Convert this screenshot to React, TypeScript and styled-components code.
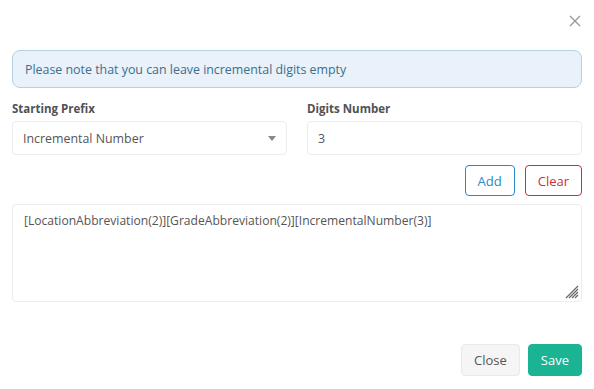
import React from "react";
import styled, { createGlobalStyle } from "styled-components";

const Global = createGlobalStyle`
  body {
    margin: 0;
    background: #ffffff;
    font-family: "Open Sans", "Liberation Sans", sans-serif;
    color: #676a6c;
  }
`;

const Modal = styled.div`
  width: 594px;
  height: 389px;
  box-sizing: border-box;
  display: flex;
  flex-direction: column;
  background: #ffffff;
`;

const Header = styled.div`
  height: 42px;
  display: flex;
  justify-content: flex-end;
  align-items: center;
  padding: 0 12px;
`;

const CloseX = styled.button`
  border: none;
  background: none;
  padding: 0;
  width: 14px;
  height: 14px;
  display: flex;
  cursor: pointer;
`;

const Body = styled.div`
  padding: 8px 12px 0;
  display: flex;
  flex-direction: column;
`;

const Alert = styled.div`
  height: 38px;
  box-sizing: border-box;
  display: flex;
  align-items: center;
  padding: 0 12px;
  background: #e9f1fa;
  border: 1px solid #b3d2e0;
  border-radius: 8px;
  color: #3b6f8c;
  font-size: 12.4px;
`;

const Row = styled.div`
  display: grid;
  grid-template-columns: 275px 275px;
  column-gap: 20px;
  margin-top: 13px;
`;

const Field = styled.div`
  display: flex;
  flex-direction: column;
`;

const Label = styled.label`
  font-size: 11.5px;
  font-weight: 700;
  color: #505254;
  height: 15px;
  margin-bottom: 5px;
`;

const Box = styled.div`
  height: 34px;
  box-sizing: border-box;
  border: 1px solid #ececec;
  border-radius: 4px;
  display: flex;
  align-items: center;
  justify-content: space-between;
  padding: 0 10px;
  font-size: 12.4px;
  color: #555555;
`;

const Caret = styled.span`
  width: 0;
  height: 0;
  border-left: 4px solid transparent;
  border-right: 4px solid transparent;
  border-top: 5px solid #888888;
`;

const Actions = styled.div`
  display: flex;
  justify-content: flex-end;
  gap: 10px;
  margin-top: 10px;
`;

const OutlineButton = styled.button<{ $tone: string }>`
  height: 31px;
  box-sizing: border-box;
  padding: 0 12px;
  background: #ffffff;
  border: 1px solid ${(p) => p.$tone};
  color: ${(p) => p.$tone};
  border-radius: 4px;
  font-family: inherit;
  font-size: 13px;
`;

const Pattern = styled.div`
  margin-top: 8px;
  height: 98px;
  box-sizing: border-box;
  border: 1px solid #ececec;
  border-radius: 4px;
  padding: 7px 11px;
  font-size: 12.1px;
  color: #555555;
  position: relative;
`;

const Grip = styled.svg`
  position: absolute;
  right: 2px;
  bottom: 2px;
`;

const Footer = styled.div`
  margin-top: auto;
  display: flex;
  justify-content: flex-end;
  gap: 8px;
  padding: 0 12px 13px;
`;

const FooterButton = styled.button<{ $primary?: boolean }>`
  height: 32px;
  box-sizing: border-box;
  padding: 0 12px;
  border-radius: 4px;
  font-family: inherit;
  font-size: 13px;
  background: ${(p) => (p.$primary ? "#1ab394" : "#f5f5f6")};
  border: 1px solid ${(p) => (p.$primary ? "#1ab394" : "#e9eaec")};
  color: ${(p) => (p.$primary ? "#ffffff" : "#555555")};
`;

export default function App() {
  return (
    <Modal>
      <Global />
      <Header>
        <CloseX aria-label="close">
          <svg width="14" height="14" viewBox="0 0 14 14">
            <path d="M2 2 L12 12 M12 2 L2 12" stroke="#9a9a9a" strokeWidth="1.4" />
          </svg>
        </CloseX>
      </Header>
      <Body>
        <Alert>Please note that you can leave incremental digits empty</Alert>
        <Row>
          <Field>
            <Label>Starting Prefix</Label>
            <Box>
              Incremental Number
              <Caret />
            </Box>
          </Field>
          <Field>
            <Label>Digits Number</Label>
            <Box>3</Box>
          </Field>
        </Row>
        <Actions>
          <OutlineButton $tone="#2b88c8">Add</OutlineButton>
          <OutlineButton $tone="#c9303a">Clear</OutlineButton>
        </Actions>
        <Pattern>
          [LocationAbbreviation(2)][GradeAbbreviation(2)][IncrementalNumber(3)]
          <Grip width="14" height="14" viewBox="0 0 14 14">
            <path
              d="M13 1 L1 13 M13 4 L4 13 M13 7 L7 13 M13 10 L10 13"
              stroke="#666"
              strokeWidth="1.2"
            />
          </Grip>
        </Pattern>
      </Body>
      <Footer>
        <FooterButton>Close</FooterButton>
        <FooterButton $primary>Save</FooterButton>
      </Footer>
    </Modal>
  );
}
